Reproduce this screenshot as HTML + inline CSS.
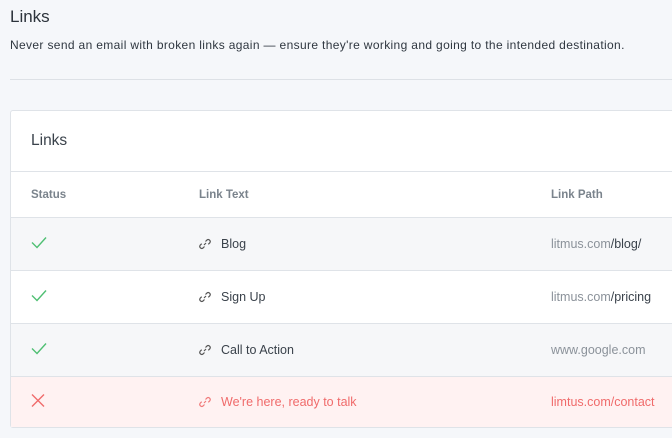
<!DOCTYPE html>
<html><head><style>
body{margin:0;width:672px;height:438px;background:#f5f7fa;font-family:"Liberation Sans",sans-serif;overflow:hidden;position:relative;color:#333b45}
.t{position:absolute;left:10px;top:7px;font-size:17px;color:#2c333b}
.s{position:absolute;left:10px;top:38px;font-size:12px;letter-spacing:0.35px;color:#2f3740}
.hr{position:absolute;left:10px;right:0;top:79px;border-top:1px solid #dde1e6}
.card{position:absolute;left:10px;top:110px;width:700px;height:316px;background:#fff;border:1px solid #dfe3e8;border-radius:3px}
.ch{height:60px;border-bottom:1px solid #dfe3e8;font-size:15.5px;line-height:60px;padding-left:20px;color:#3a424b}
.row{position:absolute;left:0;right:0;border-bottom:1px solid #dfe3e8;font-size:12.5px}
.row span{position:absolute;top:50%;transform:translateY(-50%)}
.c1{left:20px}.c2{left:188px}.c3{left:540px}
.hd{color:#7a838c;font-size:11.5px;font-weight:bold}
.g{color:#8b929a}.d{color:#3a424b}
svg.l{position:absolute;left:188px;top:50%;margin-top:-6px}
</style></head><body>
<div class="t">Links</div>
<div class="s">Never send an email with broken links again — ensure they're working and going to the intended destination.</div>
<div class="hr"></div>
<div class="card">
<div class="ch">Links</div>
<div class="row hd" style="top:61px;height:45px;border-bottom-width:2px"><span class="c1">Status</span><span class="c2">Link Text</span><span class="c3">Link Path</span></div>
<div class="row" style="top:107px;height:52px;background:#f6f7f9"><span class="c1"><svg width="16" height="12"><path d="M1 6l5 5 9-10" stroke="#4fbf73" stroke-width="1.4" fill="none"/></svg></span><svg class="l" width="12" height="12"><g stroke="#555" stroke-width="1.2" fill="none"><path d="M5 7l2-2M6.5 3.5l1.5-1.5a2 2 0 0 1 2.8 2.8l-1.5 1.5M5.5 8.5l-1.5 1.5a2 2 0 0 1-2.8-2.8l1.5-1.5"/></g></svg><span class="c2 d" style="left:210px">Blog</span><span class="c3"><b class="g" style="font-weight:normal">litmus.com</b><span class="d" style="position:static;transform:none">/blog/</span></span></div>
<div class="row" style="top:160px;height:52px"><span class="c1"><svg width="16" height="12"><path d="M1 6l5 5 9-10" stroke="#4fbf73" stroke-width="1.4" fill="none"/></svg></span><svg class="l" width="12" height="12"><g stroke="#555" stroke-width="1.2" fill="none"><path d="M5 7l2-2M6.5 3.5l1.5-1.5a2 2 0 0 1 2.8 2.8l-1.5 1.5M5.5 8.5l-1.5 1.5a2 2 0 0 1-2.8-2.8l1.5-1.5"/></g></svg><span class="c2 d" style="left:210px">Sign Up</span><span class="c3"><b class="g" style="font-weight:normal">litmus.com</b><span class="d" style="position:static;transform:none">/pricing</span></span></div>
<div class="row" style="top:213px;height:52px;background:#f6f7f9"><span class="c1"><svg width="16" height="12"><path d="M1 6l5 5 9-10" stroke="#4fbf73" stroke-width="1.4" fill="none"/></svg></span><svg class="l" width="12" height="12"><g stroke="#555" stroke-width="1.2" fill="none"><path d="M5 7l2-2M6.5 3.5l1.5-1.5a2 2 0 0 1 2.8 2.8l-1.5 1.5M5.5 8.5l-1.5 1.5a2 2 0 0 1-2.8-2.8l1.5-1.5"/></g></svg><span class="c2 d" style="left:210px">Call to Action</span><span class="c3 g">www.google.com</span></div>
<div class="row" style="top:266px;height:50px;background:#fff2f2;border-bottom:none"><span class="c1"><svg width="14" height="14"><path d="M1 1l12 12M13 1L1 13" stroke="#f06b6b" stroke-width="1.4"/></svg></span><svg class="l" width="12" height="12"><g stroke="#f07a7a" stroke-width="1.2" fill="none"><path d="M5 7l2-2M6.5 3.5l1.5-1.5a2 2 0 0 1 2.8 2.8l-1.5 1.5M5.5 8.5l-1.5 1.5a2 2 0 0 1-2.8-2.8l1.5-1.5"/></g></svg><span class="c2" style="left:210px;color:#f06b6b">We're here, ready to talk</span><span class="c3" style="color:#f06b6b">limtus.com/contact</span></div>
</div>
</body></html>
